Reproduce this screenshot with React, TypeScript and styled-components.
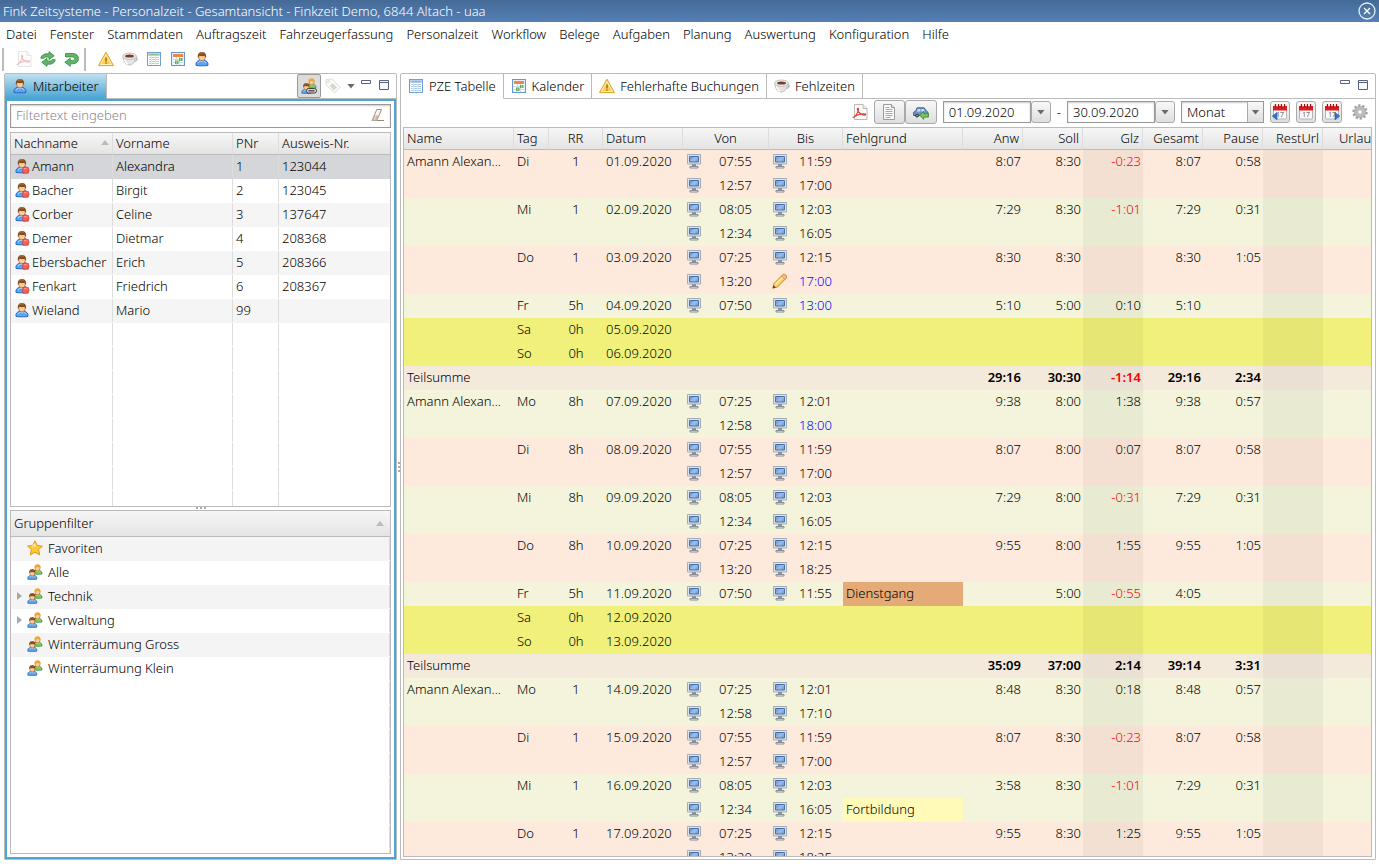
import React from 'react';
import styled, { createGlobalStyle, css } from 'styled-components';

const GlobalStyle = createGlobalStyle`
  *, *::before, *::after { box-sizing: border-box; }
  html, body, #root { height: 100%; }
  body {
    margin: 0;
    overflow: hidden;
    background: #fff;
    color: #000;
    font: 300 13px/18px "Noto Sans", "Open Sans", sans-serif;
  }
  button, input, select { font: inherit; color: inherit; margin: 0; }
  svg { display: block; flex: none; }
`;

/* ---------- icons ---------- */

const Svg = ({ size = 16, children }: { size?: number; children: React.ReactNode }) => (
  <svg width={size} height={size} viewBox={`0 0 ${size} ${size}`} aria-hidden="true">
    {children}
  </svg>
);

const PersonShape = ({ hair = '#8a4a16', body = '#5aa5f5', edge = '#1d5fc0' }) => (
  <>
    <path d="M1.500 15c-.5-3 1-4.800 4-5.500h5c3 .7 4.500 2.500 4 5.500-1.500.6-11.500.6-13 0z" fill={body} stroke={edge} />
    <path d="M3.500 12.500c.5-1.200 1.500-1.800 3-2M9.800 10.600c1.400.2 2.200.8 2.800 1.900" stroke="#b9dcff" fill="none" />
    <path d="M5.800 9.300h4.400l-2.200 2.400z" fill="#f6c79b" />
    <ellipse cx="8" cy="6" rx="3.700" ry="4" fill="#f8cfa3" stroke="#a86a34" strokeWidth=".8" />
    <path d="M3.600 6.800C2.800 2.300 5 .4 8 .4s5.200 1.900 4.400 6.400c-.9-.4-1.200-1.500-1.500-2.200-1.600.5-4.200.5-5.800 0-.3.700-.6 1.800-1.500 2.200z" fill={hair} />
    <path d="M5.500 2.300c1.200-1 3-1.200 4.300-.6" stroke="#fff" strokeOpacity=".35" fill="none" />
  </>
);

const PersonIcon = () => (
  <Svg>
    <g transform="translate(.6 .6) scale(.92)">
      <PersonShape />
    </g>
  </Svg>
);

const PersonAwayIcon = () => (
  <Svg>
    <g transform="translate(.6 .6) scale(.92)">
      <PersonShape />
    </g>
    <path d="M9 9.500h1.500c0-1.300 2-1.300 2 0h1.800v1.800c1.300 0 1.300 2 0 2v1.900H9v-1.900c-1.300 0-1.300-2 0-2z" fill="#f4605a" stroke="#d0342e" strokeWidth=".7" />
    <path d="M9.800 10.700h2.800" stroke="#ffb0aa" strokeWidth=".8" />
  </Svg>
);

const GroupShape = () => (
  <>
    <g transform="translate(5.200 0) scale(.67)">
      <PersonShape hair="#e8a423" body="#7ac25a" edge="#2f8a2a" />
    </g>
    <g transform="translate(-.2 4.800) scale(.69)">
      <PersonShape />
    </g>
  </>
);

const GroupIcon = () => (
  <Svg>
    <GroupShape />
  </Svg>
);

const GroupLinkIcon = () => (
  <Svg>
    <GroupShape />
    <rect x="5.500" y="10.500" width="10" height="4.500" rx="2" fill="#d9d9d9" stroke="#3f3f3f" />
    <path d="M7.500 12.800h6" stroke="#333" strokeWidth="1.200" />
  </Svg>
);

const PdfIcon = ({ faded = false }: { faded?: boolean }) => (
  <Svg>
    <g opacity={faded ? 0.35 : 1}>
      <path d="M2.500.5h8.500l4 4v11H2.500z" fill="#fbfbfb" stroke="#b9b9b9" />
      <path d="M11 .5v4h4" fill="#ececec" stroke="#b9b9b9" />
      <path d="M.8 13.800c2.500-1.300 5-5.300 5.700-8.300.3-1.500-1.300-1.600-1.100-.2.500 2.700 3.700 6 7.300 5.800 1.400-.2 1.300-1.400-.2-1.400-4-.2-8.700 1.800-11.700 4.100z" fill="none" stroke="#e0332c" strokeWidth="1.100" />
    </g>
  </Svg>
);

const RefreshIcon = () => (
  <Svg>
    <g fill="#62b565" stroke="#35864a" strokeWidth=".8" strokeLinejoin="round">
      <path d="M.8 7.300C1.200 3.800 4.800 2.200 9 2.900V.6l5.200 4.200L9 8.700V6.200c-2.500-.5-4.200-.4-5 1.100z" />
      <path d="M15.200 8.700c-.4 3.500-4 5.100-8.200 4.400v2.300l-5.200-4.200L7 7.300v2.500c2.500.5 4.200.4 5-1.100z" />
    </g>
  </Svg>
);

const UndoIcon = () => (
  <Svg>
    <path d="M1.500 2.500h7.300c7.600 0 7.600 10.300 0 10.300H6.300v2.500L.8 11.200l5.500-4v2.300h2.500c2.700 0 2.700-3.600 0-3.600H1.500z" fill="#62b565" stroke="#35864a" strokeWidth=".8" strokeLinejoin="round" />
  </Svg>
);

const WarningIcon = () => (
  <Svg>
    <path d="M8 1.200L15.500 14.600H.5z" fill="#f8cf55" stroke="#dfa030" strokeLinejoin="round" />
    <path d="M8 3.500l5.500 10H2.500z" fill="none" stroke="#fff3c4" strokeWidth=".9" />
    <path d="M8 6.500v4M8 11.500v1.300" stroke="#a87416" strokeWidth="1.600" />
  </Svg>
);

const CupIcon = () => (
  <Svg>
    <path d="M12.500 6.500c3.300-1.200 3.800 3.200-.8 4.200" fill="none" stroke="#b4b4b4" strokeWidth="1.300" />
    <path d="M1 5.500c.3 5.500 2.500 8.500 6.200 8.500s6-3 6.300-8.500z" fill="#e4e4e4" stroke="#b4b4b4" strokeWidth=".8" />
    <path d="M2.500 8c.6 2.800 1.800 4.700 3.500 5.300" stroke="#fff" strokeWidth="1.200" fill="none" />
    <ellipse cx="7.500" cy="5.200" rx="6.900" ry="3.200" fill="#ececec" stroke="#b4b4b4" strokeWidth=".8" />
    <ellipse cx="7.500" cy="5" rx="4.500" ry="1.600" fill="#7a3e26" />
  </Svg>
);

const TableIcon = () => (
  <Svg>
    <rect x="1.500" y="1.500" width="13" height="13" fill="#fff" stroke="#6f9fd6" />
    <path d="M2 3.500h12" stroke="#b7d2f0" strokeWidth="3" />
    <path d="M3.500 3.500h9" stroke="#8fbc80" />
    <path d="M3 6.500h10M3 8.500h10M3 10.500h10M3 12.500h10" stroke="#b2cbe8" />
    <path d="M5.500 5v9M9.500 5v9" stroke="#d9e6f5" />
  </Svg>
);

const CalendarIcon = () => (
  <Svg>
    <rect x="1.500" y="1.500" width="13" height="13" fill="#e4effa" stroke="#6496d2" />
    <rect x="3" y="3" width="10" height="10.500" fill="#fbfcfe" />
    <rect x="3" y="3" width="10" height="3" fill="#f0873c" />
    <path d="M3 8.500h10M3 11.500h10M6.500 6v8M9.500 6v8" stroke="#cddced" />
    <path d="M9 7h3.500v3H9zM5 9.500h3.500V13H5z" fill="#67a95a" />
    <path d="M10.700 7v3M6.700 9.500V13" stroke="#b9dcb0" strokeWidth=".8" />
  </Svg>
);

const MonitorIcon = () => (
  <Svg>
    <path d="M1.500 1.500h13v9.500h-13z" fill="#dfe3e8" stroke="#a3abb4" />
    <path d="M3.500 3.500h9v5.500h-9z" fill="#7da4d8" stroke="#4673b0" />
    <path d="M4 8l4-4h4v1L8.500 8.500z" fill="#a4c2e8" opacity=".7" />
    <path d="M6 11h4v2H6z" fill="#8b929a" />
    <path d="M4 13.500h8v1.500H4z" fill="#eef0f2" stroke="#7d858e" strokeWidth=".9" />
  </Svg>
);

const PencilIcon = () => (
  <Svg>
    <path d="M.8 15.200l1.200-4.700L10.800 1.700c1.800-1.400 4.800 1.500 3.400 3.400L5.500 14z" fill="#f9cf5f" stroke="#c57c22" strokeWidth=".9" strokeLinejoin="round" />
    <path d="M3.500 11.500l8-8" stroke="#fff0b0" strokeWidth="1.300" />
    <path d="M10.800 1.700c1.800-1.400 4.800 1.500 3.400 3.400l-1.400 1.300-3.300-3.400z" fill="#f5b89a" stroke="#c57c22" strokeWidth=".6" />
    <path d="M.8 15.200l.8-3 2.200 2.200z" fill="#5a3a1c" />
  </Svg>
);

const StarIcon = () => (
  <Svg>
    <path d="M8 .8l2.300 4.700 5.100.6-3.800 3.500 1.200 5.300L8 12.300l-4.800 2.600 1.200-5.300L.6 6.100l5.100-.6z" fill="#fbc934" stroke="#d6941a" strokeWidth=".9" strokeLinejoin="round" />
    <path d="M8 3l1.400 3.400-5.400.4z" fill="#ffe68a" />
  </Svg>
);

const TagIcon = () => (
  <Svg>
    <path d="M1 1.500l6-.5 8 8.300-5.500 5.700L1.300 7.300z" fill="#fafaf8" stroke="#dededb" />
    <path d="M7.500 5l4.500 4.500-3.300 3L4.800 8z" fill="#d0dccb" />
    <circle cx="3.600" cy="3.700" r="1" fill="#fff" stroke="#d8d8d8" />
  </Svg>
);

const EraserIcon = () => (
  <Svg>
    <path d="M7.800 2.500h4.700L7.800 13.500H3z" fill="#faf6f2" stroke="#a48f84" strokeLinejoin="round" />
    <path d="M5.200 8.500h4.600l-2 5H3z" fill="#cdb4a8" />
    <path d="M7 9l-1.800 4.300" stroke="#fff" strokeWidth=".6" />
    <path d="M8 13.500h7" stroke="#98857b" />
  </Svg>
);

const DocumentIcon = () => (
  <Svg>
    <path d="M2.500.5h8l3 3v12h-11z" fill="#fafafa" stroke="#9b9b9b" />
    <path d="M10.500.5v3h3" fill="#ddd" stroke="#9b9b9b" />
    <path d="M4.500 3.500h4M4.500 5.500h7M4.500 7.500h7M4.500 9.500h7M4.500 11.500h7M4.500 13.500h5" stroke="#ababab" />
  </Svg>
);

const CarIcon = () => (
  <Svg>
    <path d="M.6 11.500V8.200l2-1 1.500-3.400h7l2.400 3.400 1.500 1v3.300z" fill="#6b96cc" stroke="#35598a" strokeWidth=".9" />
    <path d="M4.800 4.900h2.600v2.500H3.700zM8.400 4.900h2.200l1.500 2.500H8.400z" fill="#cfe0f3" />
    <circle cx="4" cy="11.600" r="1.900" fill="#333" />
    <circle cx="4" cy="11.600" r=".8" fill="#bbb" />
    <path d="M6.500 11.200l4.300-3.800v2.200h4.600v3.500h-4.600v2.200z" fill="#7cc45c" stroke="#3b8a2c" strokeWidth=".9" />
  </Svg>
);

const DayIcon = ({ arrow }: { arrow?: 'left' | 'right' }) => (
  <Svg>
    <rect x="1.500" y="2.500" width="13" height="12.500" rx="1" fill="#fafafa" stroke="#b5b5b5" />
    <path d="M1 2h14v4.500H1z" fill="#dc1c1c" />
    <path d="M3.500 0v3.500M6.500 0v3.500M9.500 0v3.500M12.500 0v3.500" stroke="#a01010" strokeWidth="1.300" />
    <path d="M5 0v2.500M11 0v2.500" stroke="#fff" strokeWidth="1" />
    <text x="8" y="13" fontSize="7" fontWeight="500" textAnchor="middle" fill="#7a7a7a">17</text>
    {arrow === 'left' && <path d="M5 8.500v7.200L.3 12z" fill="#2f74d0" stroke="#1c54a5" strokeWidth=".6" />}
    {arrow === 'right' && <path d="M11 8.500v7.200l4.700-3.700z" fill="#2f74d0" stroke="#1c54a5" strokeWidth=".6" />}
  </Svg>
);

const GearIcon = () => (
  <Svg>
    <circle cx="8" cy="8" r="6.600" fill="none" stroke="#a2a2a2" strokeWidth="2.200" strokeDasharray="2.300 1.850" />
    <circle cx="8" cy="8" r="4.200" fill="none" stroke="#bcbcbc" strokeWidth="3.200" />
    <circle cx="8" cy="8" r="5.700" fill="none" stroke="#9a9a9a" strokeWidth=".6" />
    <circle cx="8" cy="8" r="2.300" fill="#fff" stroke="#999" strokeWidth=".8" />
  </Svg>
);

const CloseIcon = () => (
  <Svg size={18}>
    <circle cx="9" cy="9" r="8" fill="none" stroke="#e6eef8" strokeWidth="1.300" />
    <path d="M6 6l6 6M12 6l-6 6" stroke="#fff" strokeWidth="1.400" />
  </Svg>
);

const MinimizeIcon = () => (
  <Svg size={10}>
    <path d="M.5.5h9v3h-9z" fill="#fff" stroke="#58607f" />
  </Svg>
);

const MaximizeIcon = () => (
  <Svg size={10}>
    <path d="M.5.5h9v9h-9zM0 2.500h10" fill="#f6f8fa" stroke="#58607f" />
  </Svg>
);

const Triangle = styled.span<{ $dir: 'up' | 'down' | 'right'; $color?: string }>`
  flex: none;
  width: ${p => (p.$dir === 'right' ? 5 : 8)}px;
  height: ${p => (p.$dir === 'right' ? 8 : 5)}px;
  background: ${p => p.$color ?? '#6a6a6a'};
  clip-path: ${p =>
    p.$dir === 'up'
      ? 'polygon(50% 0, 100% 100%, 0 100%)'
      : p.$dir === 'down'
        ? 'polygon(0 0, 100% 0, 50% 100%)'
        : 'polygon(0 0, 100% 50%, 0 100%)'};
`;

/* ---------- window frame ---------- */

const Window = styled.div`
  display: flex;
  flex-direction: column;
  height: 100vh;
`;

const TitleBar = styled.header`
  flex: none;
  display: flex;
  align-items: center;
  justify-content: space-between;
  height: 22px;
  padding: 0 3px;
  color: #fff;
  background: linear-gradient(#446a97, #5580b5);
`;

const Title = styled.h1`
  margin: 0;
  font-size: 13px;
  font-weight: inherit;
`;

const BareButton = styled.button`
  display: flex;
  align-items: center;
  justify-content: center;
  padding: 0;
  border: 0;
  background: none;
`;

const MenuBar = styled.nav`
  flex: none;
  display: flex;
  align-items: center;
  gap: 13px;
  height: 24px;
  padding: 0 6px;
`;

const MenuItem = styled.button`
  padding: 0;
  border: 0;
  background: none;
  white-space: nowrap;
`;

const ToolBar = styled.div`
  flex: none;
  display: flex;
  align-items: center;
  gap: 8px;
  height: 26px;
  padding: 0 0 0 6px;
`;

const ToolDivider = styled.span`
  width: 2px;
  height: 23px;
  margin: 0 4px 0 -4px;
  background: #bbb;
`;

const Workbench = styled.main`
  flex: 1;
  display: flex;
  min-height: 0;
  padding: 1px 3px 4px 4px;
`;

const Panel = styled.section<{ $side?: boolean }>`
  display: flex;
  flex-direction: column;
  min-width: 0;
  border: 1px solid #bbb;
  border-radius: 2px 2px 0 0;
  ${p => (p.$side ? 'flex: 0 0 393px;' : 'flex: 1;')}
`;

const Sash = styled.div<{ $horizontal?: boolean }>`
  flex: none;
  display: flex;
  align-items: center;
  justify-content: center;
  gap: 2px;
  flex-direction: ${p => (p.$horizontal ? 'row' : 'column')};
  ${p => (p.$horizontal ? 'height: 3px;' : 'width: 3px;')}
`;

const Grip = styled.i`
  width: 2px;
  height: 2px;
  background: #aaa;
`;

const Grips = () => (
  <>
    <Grip />
    <Grip />
    <Grip />
  </>
);

/* ---------- tabs ---------- */

const TabStrip = styled.div`
  flex: none;
  display: flex;
  height: 25px;
`;

const Tab = styled.button<{ $active?: boolean; $blue?: boolean }>`
  display: flex;
  align-items: center;
  gap: 5px;
  padding: 0 7px;
  border: 0;
  border-right: 1px solid #bbb;
  border-bottom: 1px solid ${p => (p.$active ? 'transparent' : '#bbb')};
  background: none;
  white-space: nowrap;
  ${p =>
    p.$blue &&
    css`
      border-bottom-color: #4ba6d3;
      background: linear-gradient(#bfe0f0, #4ba6d3);
    `}
`;

const TabTools = styled.div`
  flex: 1;
  display: flex;
  align-items: flex-start;
  justify-content: flex-end;
  padding-right: 3px;
  border-bottom: 1px solid #bbb;
`;

const TabTool = styled(BareButton)<{ $width: number }>`
  width: ${p => p.$width}px;
  height: 24px;
`;

const PaneButton = styled(BareButton)`
  width: 18px;
  height: 10px;
  margin-top: 6px;
  align-items: flex-start;
`;

const ToggleButton = styled(BareButton)`
  width: 24px;
  height: 24px;
  border: 1px solid #999;
  border-radius: 2px;
  background: #dcdcdc;
`;

/* ---------- employee panel ---------- */

const BlueFrame = styled.div`
  flex: 1;
  display: flex;
  flex-direction: column;
  min-height: 0;
  padding: 3px;
  border: 2px solid #4ba6d3;
`;

const FilterBox = styled.label`
  flex: none;
  display: flex;
  align-items: center;
  height: 24px;
  padding: 0 5px 2px;
  border: 1px solid #999;
  box-shadow: inset 0 1px 2px #ccc;
  margin-bottom: 4px;
`;

const FilterInput = styled.input`
  flex: 1;
  min-width: 0;
  padding: 0;
  border: 0;
  outline: 0;
  background: none;
  &::placeholder { color: #888; opacity: 1; }
`;

const headerFill = 'linear-gradient(#f6f6f6, #e4e4e4)';

const EmployeeBox = styled.div`
  flex: 375 1 0;
  min-height: 0;
  overflow: hidden;
  border: 1px solid #bbb;
`;

const EmployeeTable = styled.table`
  width: 100%;
  table-layout: fixed;
  border-collapse: separate;
  border-spacing: 0;
`;

const EmployeeHead = styled.th`
  height: 22px;
  padding: 0 3px 2px;
  border-bottom: 1px solid #bbb;
  border-right: 1px solid #ddd;
  background: ${headerFill};
  font-weight: inherit;
  text-align: left;
  &:last-child { border-right: 0; }
`;

const HeadContent = styled.div`
  display: flex;
  align-items: center;
  justify-content: space-between;
`;

const EmployeeRow = styled.tr<{ $selected?: boolean }>`
  background: #fff;
  &:nth-child(-2n + 7) { background: #f5f5f5; }
  ${p => p.$selected && '&&& { background: #d5d6da; }'}
`;

const EmployeeCell = styled.td`
  height: 24px;
  padding: 0 3px 2px;
  white-space: nowrap;
  &:not(:last-child) {
    background: linear-gradient(#ddd, #ddd) right top / 1px 23px no-repeat;
  }
`;

const IconLabel = styled.span`
  display: flex;
  align-items: center;
  gap: 2px;
`;

const GroupBox = styled.div`
  flex: 344 1 0;
  display: flex;
  flex-direction: column;
  min-height: 0;
  overflow: hidden;
  border: 1px solid #bbb;
`;

const GroupHeader = styled.button`
  flex: none;
  display: flex;
  align-items: center;
  justify-content: space-between;
  height: 26px;
  padding: 0 6px 0 3px;
  border: 0;
  border-bottom: 1px solid #bbb;
  background: ${headerFill};
`;

const GroupList = styled.ul`
  flex: 1;
  margin: 0;
  padding: 0 1px 0 0;
  list-style: none;
  background: linear-gradient(#ddd 23px, transparent 23px) right top / 1px 24px repeat-y;
`;

const GroupRow = styled.li`
  display: grid;
  grid-template-columns: 11px 16px 1fr;
  align-items: center;
  gap: 5px;
  height: 24px;
  padding-bottom: 2px;
  background: #fff;
  &:nth-child(odd) { background: #f4f4f4; }
`;

const TreeArrow = styled.span`
  display: flex;
  justify-content: flex-end;
`;

/* ---------- time table panel ---------- */

const TimeTools = styled.div`
  flex: none;
  display: flex;
  align-items: center;
  justify-content: flex-end;
  gap: 6px;
  height: 28px;
  padding: 0 7px 2px 0;
`;

const Joined = styled.div`
  display: flex;
  align-items: center;
`;

const PushButton = styled.button<{ $width: number; $height?: number }>`
  display: flex;
  align-items: center;
  justify-content: center;
  width: ${p => p.$width}px;
  height: ${p => p.$height ?? 22}px;
  padding: 0;
  border: 1px solid #a9a9a9;
  border-radius: 3px;
  background: linear-gradient(#f8f8f8, #dedede);
`;

const DateInput = styled.input`
  width: 88px;
  height: 22px;
  padding: 0 5px;
  border: 1px solid #999;
  background: #fff;
  box-shadow: inset 0 1px 2px #ccc;
`;

const ComboBox = styled.div`
  display: flex;
  width: 83px;
  height: 22px;
  border: 1px solid #999;
  box-shadow: inset 0 1px 2px #ccc;
`;

const ComboSelect = styled.select`
  flex: 1;
  min-width: 0;
  padding: 0 5px;
  border: 0;
  background: none;
  appearance: none;
`;

const ComboArrow = styled.span`
  display: flex;
  align-items: center;
  justify-content: center;
  width: 16px;
  border-left: 1px solid #aaa;
  background: linear-gradient(#f8f8f8, #dedede);
`;

const SettingsButton = styled(BareButton)`
  margin-left: 4px;
`;

const TimeBox = styled.div`
  flex: 1;
  min-height: 0;
  margin: 0 3px 2px 2px;
  overflow: hidden;
  border: 1px solid #bbb;
`;

const TimeTable = styled.table`
  width: 100%;
  min-width: 979px;
  table-layout: fixed;
  border-collapse: separate;
  border-spacing: 0;
`;

type Align = 'left' | 'center' | 'right';

const TimeHead = styled.th<{ $align: Align }>`
  height: 22px;
  padding: 0 ${p => (p.$align === 'center' ? 0 : 3)}px 2px;
  border-bottom: 1px solid #bbb;
  border-right: 1px solid #ddd;
  background: ${headerFill};
  font-weight: inherit;
  text-align: ${p => p.$align};
`;

const tones = {
  peach: '#feeadc',
  green: '#f3f4db',
  yellow: '#f0f07a',
  sum: '#f4eadc',
};
type Tone = keyof typeof tones;

const TimeRow = styled.tr<{ $tone: Tone }>`
  background: ${p => tones[p.$tone]};
`;

const TimeCell = styled.td<{ $align?: Align; $shade?: boolean; $fill?: string; $color?: string; $bold?: boolean }>`
  height: 24px;
  padding: 0 ${p => (p.$align === 'right' ? 2 : p.$align === 'center' ? 0 : 3)}px 2px;
  white-space: nowrap;
  text-align: ${p => p.$align ?? 'left'};
  color: ${p => p.$color ?? 'inherit'};
  font-weight: ${p => (p.$bold ? 600 : 'inherit')};
  ${p => p.$shade && 'background: rgba(0, 0, 0, 0.04);'}
  ${p => p.$fill && `background: ${p.$fill};`}
`;

const Stamp = styled.span<{ $manual?: boolean }>`
  display: grid;
  grid-template-columns: 16px 1fr;
  align-items: center;
  padding-left: 3px;
  text-align: center;
  color: ${p => (p.$manual ? '#00f' : 'inherit')};
`;

/* ---------- data ---------- */

const menus = ['Datei', 'Fenster', 'Stammdaten', 'Auftragszeit', 'Fahrzeugerfassung', 'Personalzeit', 'Workflow', 'Belege', 'Aufgaben', 'Planung', 'Auswertung', 'Konfiguration', 'Hilfe'];

const employees: [string, string, string, string][] = [
  ['Amann', 'Alexandra', '1', '123044'],
  ['Bacher', 'Birgit', '2', '123045'],
  ['Corber', 'Celine', '3', '137647'],
  ['Demer', 'Dietmar', '4', '208368'],
  ['Ebersbacher', 'Erich', '5', '208366'],
  ['Fenkart', 'Friedrich', '6', '208367'],
  ['Wieland', 'Mario', '99', ''],
];

const groups = ['Favoriten', 'Alle', 'Technik', 'Verwaltung', 'Winterräumung Gross', 'Winterräumung Klein'];

/* A "!" marks a time entered by hand, a leading "p" one that was edited. */
type Booking = [string, string, string?];
type Day = {
  name?: boolean;
  tag: string;
  rr: string;
  date: string;
  bookings?: Booking[];
  sums?: string[];
};
type Week = { days: Day[]; total?: string[] };

const weeks: Week[] = [
  {
    days: [
      { name: true, tag: 'Di', rr: '1', date: '01.09.2020', bookings: [['07:55', '11:59'], ['12:57', '17:00']], sums: ['8:07', '8:30', '-0:23', '8:07', '0:58'] },
      { tag: 'Mi', rr: '1', date: '02.09.2020', bookings: [['08:05', '12:03'], ['12:34', '16:05']], sums: ['7:29', '8:30', '-1:01', '7:29', '0:31'] },
      { tag: 'Do', rr: '1', date: '03.09.2020', bookings: [['07:25', '12:15'], ['13:20', 'p17:00!']], sums: ['8:30', '8:30', '', '8:30', '1:05'] },
      { tag: 'Fr', rr: '5h', date: '04.09.2020', bookings: [['07:50', '13:00!']], sums: ['5:10', '5:00', '0:10', '5:10', ''] },
      { tag: 'Sa', rr: '0h', date: '05.09.2020' },
      { tag: 'So', rr: '0h', date: '06.09.2020' },
    ],
    total: ['29:16', '30:30', '-1:14', '29:16', '2:34'],
  },
  {
    days: [
      { name: true, tag: 'Mo', rr: '8h', date: '07.09.2020', bookings: [['07:25', '12:01'], ['12:58', '18:00!']], sums: ['9:38', '8:00', '1:38', '9:38', '0:57'] },
      { tag: 'Di', rr: '8h', date: '08.09.2020', bookings: [['07:55', '11:59'], ['12:57', '17:00']], sums: ['8:07', '8:00', '0:07', '8:07', '0:58'] },
      { tag: 'Mi', rr: '8h', date: '09.09.2020', bookings: [['08:05', '12:03'], ['12:34', '16:05']], sums: ['7:29', '8:00', '-0:31', '7:29', '0:31'] },
      { tag: 'Do', rr: '8h', date: '10.09.2020', bookings: [['07:25', '12:15'], ['13:20', '18:25']], sums: ['9:55', '8:00', '1:55', '9:55', '1:05'] },
      { tag: 'Fr', rr: '5h', date: '11.09.2020', bookings: [['07:50', '11:55', 'Dienstgang']], sums: ['', '5:00', '-0:55', '4:05', ''] },
      { tag: 'Sa', rr: '0h', date: '12.09.2020' },
      { tag: 'So', rr: '0h', date: '13.09.2020' },
    ],
    total: ['35:09', '37:00', '2:14', '39:14', '3:31'],
  },
  {
    days: [
      { name: true, tag: 'Mo', rr: '1', date: '14.09.2020', bookings: [['07:25', '12:01'], ['12:58', '17:10']], sums: ['8:48', '8:30', '0:18', '8:48', '0:57'] },
      { tag: 'Di', rr: '1', date: '15.09.2020', bookings: [['07:55', '11:59'], ['12:57', '17:00']], sums: ['8:07', '8:30', '-0:23', '8:07', '0:58'] },
      { tag: 'Mi', rr: '1', date: '16.09.2020', bookings: [['08:05', '12:03'], ['12:34', '16:05', 'Fortbildung']], sums: ['3:58', '8:30', '-1:01', '7:29', '0:31'] },
      { tag: 'Do', rr: '1', date: '17.09.2020', bookings: [['07:25', '12:15'], ['13:20', '18:25']], sums: ['9:55', '8:30', '1:25', '9:55', '1:05'] },
    ],
  },
];

const reasonFill: Record<string, string> = { Dienstgang: '#e4aa78', Fortbildung: '#fffab8' };

const dayTone = (tag: string): Tone =>
  tag === 'Sa' || tag === 'So' ? 'yellow' : tag === 'Di' || tag === 'Do' ? 'peach' : 'green';

const columns: { label: string; width?: number; align: Align }[] = [
  { label: 'Name', width: 110, align: 'left' },
  { label: 'Tag', width: 35, align: 'left' },
  { label: 'RR', width: 54, align: 'center' },
  { label: 'Datum', width: 80, align: 'left' },
  { label: 'Von', width: 86, align: 'center' },
  { label: 'Bis', width: 74, align: 'center' },
  { label: 'Fehlgrund', width: 120, align: 'left' },
  { label: 'Anw', width: 60, align: 'right' },
  { label: 'Soll', width: 60, align: 'right' },
  { label: 'Glz', width: 60, align: 'right' },
  { label: 'Gesamt', width: 60, align: 'right' },
  { label: 'Pause', width: 60, align: 'right' },
  { label: 'RestUrl', width: 60, align: 'right' },
  { label: 'Urlaub', align: 'right' },
];

/* ---------- parts ---------- */

const TimeStamp = ({ value }: { value: string }) => (
  <Stamp $manual={value.endsWith('!')}>
    {value.startsWith('p') ? <PencilIcon /> : <MonitorIcon />}
    <span>{value.replace(/[p!]/g, '')}</span>
  </Stamp>
);

const SumCells = ({ values = [], bold }: { values?: string[]; bold?: boolean }) => (
  <>
    {[0, 1, 2, 3, 4, 5, 6].map(i => {
      const value = values[i] ?? '';
      return (
        <TimeCell key={i} $align="right" $shade={i === 2 || i === 5} $bold={bold} $color={value.startsWith('-') ? '#f00' : undefined}>
          {value}
        </TimeCell>
      );
    })}
  </>
);

const DayRows = ({ day }: { day: Day }) => {
  const lines: (Booking | null)[] = day.bookings ?? [null];
  return (
    <>
      {lines.map((line, i) => {
        const first = i === 0;
        const reason = line?.[2];
        return (
          <TimeRow key={i} $tone={dayTone(day.tag)}>
            <TimeCell>{first && day.name ? 'Amann Alexan...' : ''}</TimeCell>
            <TimeCell>{first ? day.tag : ''}</TimeCell>
            <TimeCell $align="center">{first ? day.rr : ''}</TimeCell>
            <TimeCell>{first ? day.date : ''}</TimeCell>
            <TimeCell $align="center">{line && <TimeStamp value={line[0]} />}</TimeCell>
            <TimeCell $align="center">{line && <TimeStamp value={line[1]} />}</TimeCell>
            <TimeCell $fill={reason && reasonFill[reason]}>{reason}</TimeCell>
            <SumCells values={first ? day.sums : undefined} />
          </TimeRow>
        );
      })}
    </>
  );
};

const DateField = ({ label, value }: { label: string; value: string }) => (
  <Joined>
    <DateInput aria-label={label} defaultValue={value} />
    <PushButton $width={20} aria-label={`${label} wählen`}>
      <Triangle $dir="down" />
    </PushButton>
  </Joined>
);

const PaneButtons = () => (
  <>
    <PaneButton aria-label="Minimieren">
      <MinimizeIcon />
    </PaneButton>
    <PaneButton aria-label="Maximieren">
      <MaximizeIcon />
    </PaneButton>
  </>
);

const EmployeePanel = () => (
  <Panel $side>
    <TabStrip>
      <Tab $active $blue>
        <PersonIcon />
        Mitarbeiter
      </Tab>
      <TabTools>
        <ToggleButton aria-label="Verknüpfen" aria-pressed="true">
          <GroupLinkIcon />
        </ToggleButton>
        <TabTool $width={24} aria-label="Ausweis">
          <TagIcon />
        </TabTool>
        <TabTool $width={12} aria-label="Menü">
          <Triangle $dir="down" />
        </TabTool>
        <PaneButtons />
      </TabTools>
    </TabStrip>
    <BlueFrame>
      <FilterBox>
        <FilterInput placeholder="Filtertext eingeben" aria-label="Filtertext" />
        <EraserIcon />
      </FilterBox>
      <EmployeeBox>
        <EmployeeTable>
          <colgroup>
            <col width={102} />
            <col width={120} />
            <col width={46} />
            <col />
          </colgroup>
          <thead>
            <tr>
              <EmployeeHead>
                <HeadContent>
                  Nachname
                  <Triangle $dir="up" $color="#bbb" />
                </HeadContent>
              </EmployeeHead>
              <EmployeeHead>Vorname</EmployeeHead>
              <EmployeeHead>PNr</EmployeeHead>
              <EmployeeHead>Ausweis-Nr.</EmployeeHead>
            </tr>
          </thead>
          <tbody>
            {employees.map(([last, first, nr, badge], i) => (
              <EmployeeRow key={last} $selected={i === 0}>
                <EmployeeCell>
                  <IconLabel>
                    {last === 'Wieland' ? <PersonIcon /> : <PersonAwayIcon />}
                    {last}
                  </IconLabel>
                </EmployeeCell>
                <EmployeeCell>{first}</EmployeeCell>
                <EmployeeCell>{nr}</EmployeeCell>
                <EmployeeCell>{badge}</EmployeeCell>
              </EmployeeRow>
            ))}
            {Array.from({ length: 40 }, (_, i) => (
              <EmployeeRow key={i}>
                <EmployeeCell />
                <EmployeeCell />
                <EmployeeCell />
                <EmployeeCell />
              </EmployeeRow>
            ))}
          </tbody>
        </EmployeeTable>
      </EmployeeBox>
      <Sash $horizontal>
        <Grips />
      </Sash>
      <GroupBox>
        <GroupHeader>
          Gruppenfilter
          <Triangle $dir="up" $color="#bbb" />
        </GroupHeader>
        <GroupList>
          {groups.map((group, i) => (
            <GroupRow key={group}>
              <TreeArrow>{(i === 2 || i === 3) && <Triangle $dir="right" $color="#aaa" />}</TreeArrow>
              {i === 0 ? <StarIcon /> : <GroupIcon />}
              {group}
            </GroupRow>
          ))}
        </GroupList>
      </GroupBox>
    </BlueFrame>
  </Panel>
);

const TimePanel = () => (
  <Panel>
    <TabStrip>
      <Tab $active>
        <TableIcon />
        PZE Tabelle
      </Tab>
      <Tab>
        <CalendarIcon />
        Kalender
      </Tab>
      <Tab>
        <WarningIcon />
        Fehlerhafte Buchungen
      </Tab>
      <Tab>
        <CupIcon />
        Fehlzeiten
      </Tab>
      <TabTools>
        <PaneButtons />
      </TabTools>
    </TabStrip>
    <TimeTools>
      <BareButton aria-label="PDF">
        <PdfIcon />
      </BareButton>
      <Joined>
        <PushButton $width={31} $height={24} aria-label="Bericht">
          <DocumentIcon />
        </PushButton>
        <PushButton $width={32} $height={24} aria-label="Fahrten">
          <CarIcon />
        </PushButton>
      </Joined>
      <DateField label="Von" value="01.09.2020" />
      <span>-</span>
      <DateField label="Bis" value="30.09.2020" />
      <ComboBox>
        <ComboSelect aria-label="Zeitraum" defaultValue="Monat">
          <option>Monat</option>
        </ComboSelect>
        <ComboArrow>
          <Triangle $dir="down" />
        </ComboArrow>
      </ComboBox>
      <PushButton $width={20} aria-label="Zurück">
        <DayIcon arrow="left" />
      </PushButton>
      <PushButton $width={20} aria-label="Heute">
        <DayIcon />
      </PushButton>
      <PushButton $width={20} aria-label="Weiter">
        <DayIcon arrow="right" />
      </PushButton>
      <SettingsButton aria-label="Einstellungen">
        <GearIcon />
      </SettingsButton>
    </TimeTools>
    <TimeBox>
      <TimeTable>
        <colgroup>
          {columns.map(c => (
            <col key={c.label} width={c.width} />
          ))}
        </colgroup>
        <thead>
          <tr>
            {columns.map(c => (
              <TimeHead key={c.label} $align={c.align}>
                {c.label}
              </TimeHead>
            ))}
          </tr>
        </thead>
        <tbody>
          {weeks.map((week, w) => (
            <React.Fragment key={w}>
              {week.days.map(day => (
                <DayRows key={day.date} day={day} />
              ))}
              {week.total && (
                <TimeRow $tone="sum">
                  <TimeCell colSpan={7}>Teilsumme</TimeCell>
                  <SumCells values={week.total} bold />
                </TimeRow>
              )}
            </React.Fragment>
          ))}
        </tbody>
      </TimeTable>
    </TimeBox>
  </Panel>
);

const App = () => (
  <>
    <GlobalStyle />
    <Window>
      <TitleBar>
        <Title>Fink Zeitsysteme - Personalzeit - Gesamtansicht - Finkzeit Demo, 6844 Altach - uaa</Title>
        <BareButton aria-label="Schließen">
          <CloseIcon />
        </BareButton>
      </TitleBar>
      <MenuBar>
        {menus.map(menu => (
          <MenuItem key={menu}>{menu}</MenuItem>
        ))}
      </MenuBar>
      <ToolBar>
        <ToolDivider />
        <BareButton aria-label="PDF">
          <PdfIcon faded />
        </BareButton>
        <BareButton aria-label="Aktualisieren">
          <RefreshIcon />
        </BareButton>
        <BareButton aria-label="Rückgängig">
          <UndoIcon />
        </BareButton>
        <ToolDivider />
        <BareButton aria-label="Fehlerhafte Buchungen">
          <WarningIcon />
        </BareButton>
        <BareButton aria-label="Fehlzeiten">
          <CupIcon />
        </BareButton>
        <BareButton aria-label="PZE Tabelle">
          <TableIcon />
        </BareButton>
        <BareButton aria-label="Kalender">
          <CalendarIcon />
        </BareButton>
        <BareButton aria-label="Mitarbeiter">
          <PersonIcon />
        </BareButton>
      </ToolBar>
      <Workbench>
        <EmployeePanel />
        <Sash>
          <Grips />
        </Sash>
        <TimePanel />
      </Workbench>
    </Window>
  </>
);

export default App;
